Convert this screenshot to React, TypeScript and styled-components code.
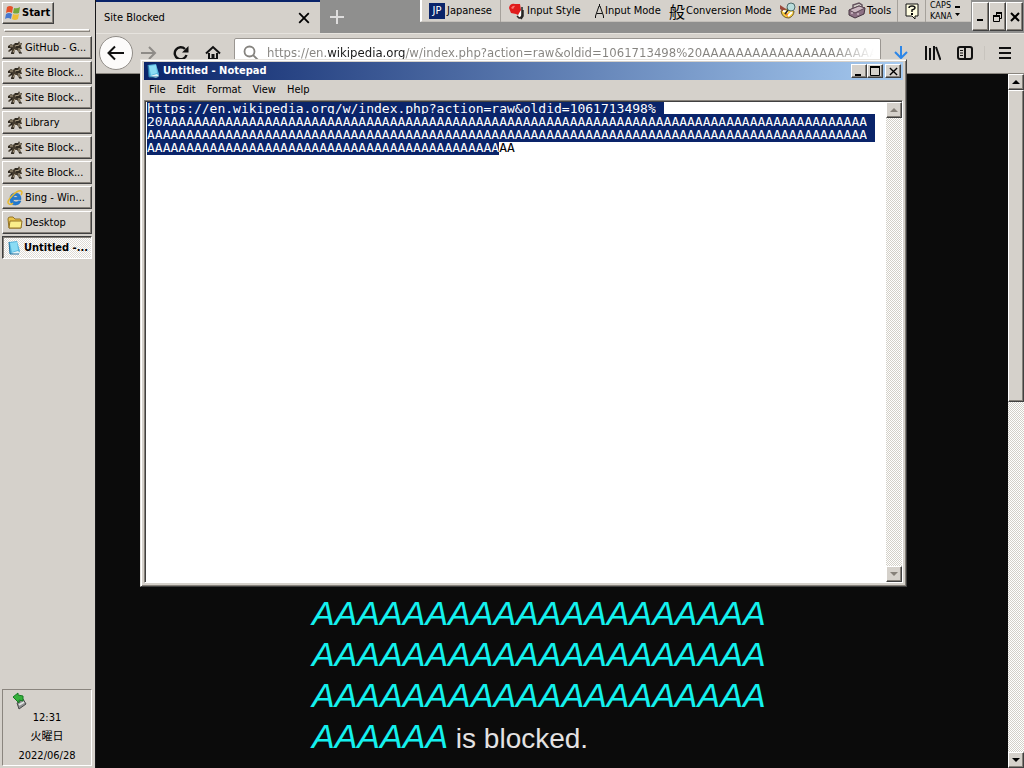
import React, { useEffect, useRef } from 'react';
import styled, { createGlobalStyle, css } from 'styled-components';

const face = '#d5d1cb';
const navy = '#0a246a';
const uiFont = '"DejaVu Sans Condensed", "Noto Sans CJK JP", sans-serif';

const GlobalStyle = createGlobalStyle`
  *, *::before, *::after { box-sizing: border-box; }
  body { margin: 0; background: #0b0b0b; font: 11px/14px ${uiFont}; color: #000; }
  button, input, textarea { font: inherit; color: inherit; margin: 0; padding: 0; border: 0; border-radius: 0; outline: 0; }
  button { background: none; white-space: nowrap; }
  svg { display: block; flex: none; }
`;

const raised = css`
  background: ${face};
  border: 1px solid;
  border-color: #fff #404040 #404040 #fff;
  box-shadow: inset -1px -1px 0 #858079;
`;

const checker = css`
  background: repeating-conic-gradient(#fff 0 25%, #d3d0c8 0 50%) 0 0 / 2px 2px;
`;

const Desktop = styled.div`
  position: relative;
  display: flex;
  height: 100vh;
  overflow: hidden;
`;

/* Taskbar */
const Taskbar = styled.aside`
  display: flex;
  flex-direction: column;
  flex: none;
  width: 96px;
  padding: 2px 3px 2px 2px;
  background: ${face};
  border-right: 1px solid #17171a;
`;

const StartButton = styled.button`
  ${raised}
  display: flex;
  align-items: center;
  gap: 1px;
  width: 52px;
  height: 22px;
  padding-left: 1px;
  font-weight: bold;
`;

const Divider = styled.div`
  height: 3px;
  margin: 5px 2px 4px;
  border: 1px solid;
  border-color: #fff #8a857e #8a857e #fff;
`;

const TaskList = styled.nav`
  display: flex;
  flex-direction: column;
  gap: 2px;
`;

const TaskButton = styled.button<{ $active?: boolean }>`
  ${raised}
  display: flex;
  align-items: center;
  gap: 2px;
  height: 23px;
  padding: 0 1px 0 4px;
  overflow: hidden;
  ${p => p.$active && css`
    background: repeating-conic-gradient(#fff 0 25%, #dedbd5 0 50%) 0 0 / 2px 2px;
    border-color: #404040 #fff #fff #404040;
    box-shadow: inset 1px 1px 0 #858079;
    font-weight: bold;
  `}
`;

const Tray = styled.div`
  display: flex;
  flex-direction: column;
  gap: 5px;
  margin-top: auto;
  padding: 2px 2px 2px;
  border: 1px solid;
  border-color: #8a857e #fff #fff #8a857e;
  text-align: center;
`;

const TrayIcons = styled.div`
  height: 14px;
  padding-left: 6px;
`;

/* Browser */
const Browser = styled.main`
  display: flex;
  flex: 1;
  flex-direction: column;
  min-width: 0;
`;

const TabStrip = styled.div`
  display: flex;
  flex: none;
  height: 33px;
  background: #8f8f8e;
`;

const Tab = styled.div`
  display: flex;
  align-items: center;
  justify-content: space-between;
  width: 224px;
  padding: 0 10px 0 8px;
  background: ${face};
  border-top: 2px solid ${navy};
`;

const IconButton = styled.button`
  display: grid;
  place-items: center;
`;

const NewTab = styled(IconButton)`
  width: 34px;
`;

const NavBar = styled.div`
  display: flex;
  flex: none;
  align-items: center;
  gap: 16px;
  height: 41px;
  padding: 0 13px 2px 3px;
  background: ${face};
  border-top: 1px solid #e6e3de;
  border-bottom: 1px solid #8a857e;
`;

const BackButton = styled(IconButton)`
  width: 34px;
  height: 34px;
  margin-right: -8px;
  background: #fcfbfa;
  border: 1px solid #918d88;
  border-radius: 50%;
`;

const AddressBox = styled.label`
  display: flex;
  flex: 1;
  align-items: center;
  gap: 8px;
  height: 30px;
  margin-left: -3px;
  padding: 0 6px 0 8px;
  background: #fff;
  border: 1px solid #9a9691;
  border-radius: 2px;
`;

const AddressInput = styled.input`
  flex: 1;
  min-width: 0;
  height: 20px;
  font-size: 13px;
  color: transparent;
  background: linear-gradient(to right, #85837f 0 61px, #1a1a1a 61px 138px, #85837f 138px calc(100% - 40px), transparent);
  -webkit-background-clip: text;
  background-clip: text;
`;

const Tools = styled.div`
  display: flex;
  align-items: center;
  gap: 16px;
  margin-left: -4px;
`;

const MenuSlot = styled.div`
  margin-left: -5px;
  padding-left: 14px;
  border-left: 1px solid #c8c4be;
`;

const Viewport = styled.div`
  display: flex;
  flex: 1;
  min-height: 0;
`;

const Page = styled.article`
  flex: 1;
  min-width: 0;
  padding-top: 521px;
  overflow: hidden;
  background: #0b0b0b;
`;

const Message = styled.p`
  width: 480px;
  max-width: 100%;
  margin: 0 auto;
  padding-right: 12px;
  overflow-wrap: anywhere;
  color: #e4e2e2;
  font: 28px/41px "Liberation Sans", sans-serif;
`;

const Blocked = styled.em`
  color: #14f1ee;
  font-size: 34px;
  line-height: 34px;
`;

const Scrollbar = styled.div`
  ${checker}
  display: flex;
  flex: none;
  flex-direction: column;
  justify-content: space-between;
  width: 16px;
`;

const ScrollButton = styled.button`
  ${raised}
  display: grid;
  place-items: center;
  flex: none;
  width: 16px;
  height: 16px;
`;

const ScrollThumb = styled.div`
  ${raised}
  height: 312px;
  margin-bottom: auto;
`;

/* Browser window buttons */
const WindowButtons = styled.div`
  position: absolute;
  top: 2px;
  right: 1px;
  display: flex;
`;

const WindowButton = styled.button`
  ${raised}
  display: grid;
  place-items: center;
  width: 17px;
  height: 29px;
`;

/* Language bar */
const LanguageBar = styled.div`
  position: absolute;
  top: 0;
  right: 53px;
  display: flex;
  align-items: center;
  width: 551px;
  height: 22px;
  background: ${face};
  border-left: 2px solid #fff;
  border-bottom: 1px solid #c4c0ba;
`;

const LangButton = styled.button<{ $width: number; $ruled?: boolean }>`
  display: flex;
  align-items: center;
  gap: 1px;
  width: ${p => p.$width}px;
  height: 22px;
  padding-left: 7px;
  border-right: 1px solid ${p => (p.$ruled ? '#a5a19b' : 'transparent')};
`;

const LangBadge = styled.span`
  width: 16px;
  height: 16px;
  margin-right: 1px;
  background: ${navy};
  color: #fff;
  line-height: 16px;
  text-align: center;
`;

const Glyph = styled.span`
  font: 16px/20px "Noto Sans CJK JP", sans-serif;
`;

const Locks = styled.div`
  display: flex;
  flex-direction: column;
  padding-left: 4px;
  width: 28px;
  font: 8px/11px "DejaVu Sans", sans-serif;
`;

/* Notepad */
const Notepad = styled.section`
  position: absolute;
  top: 59px;
  right: 117px;
  left: 140px;
  display: flex;
  flex-direction: column;
  height: 528px;
  padding: 2px 3px 3px;
  background: ${face};
  border: 1px solid;
  border-color: #e6e3de #404040 #404040 #e6e3de;
  box-shadow: inset 1px 1px 0 #fff, inset -1px -1px 0 #858079;
`;

const TitleBar = styled.header`
  display: flex;
  flex: none;
  align-items: center;
  gap: 2px;
  height: 18px;
  padding: 0 2px;
  background: linear-gradient(to right, ${navy}, #a6caf0);
  color: #fff;
  font-weight: bold;
`;

const TitleText = styled.h1`
  flex: 1;
  margin: 0;
  font: inherit;
`;

const TitleButtons = styled.div`
  display: flex;
  color: #000;
`;

const TitleButton = styled.button<{ $spaced?: boolean }>`
  ${raised}
  display: grid;
  place-items: center;
  width: 16px;
  height: 14px;
  margin-left: ${p => (p.$spaced ? 2 : 0)}px;
`;

const MenuBar = styled.nav`
  display: flex;
  flex: none;
  align-items: center;
  height: 20px;
  padding-left: 5px;
  gap: 11px;
`;

const Editor = styled.div`
  display: flex;
  flex: 1;
  min-height: 0;
  background: #fff;
  border: 1px solid;
  border-color: #858079 #fff #fff #858079;
  box-shadow: inset 1px 1px 0 #404040;
  padding: 1px 0 0 2px;
`;

const TextArea = styled.textarea`
  flex: 1;
  min-width: 0;
  resize: none;
  overflow: hidden;
  background: transparent;
  font: 13px/13px "DejaVu Sans Mono", monospace;
  white-space: pre;
  &::selection { background: ${navy}; color: #fff; }
`;

const Arrow = ({ up, muted }: { up?: boolean; muted?: boolean }) => (
  <svg width="8" height="5" viewBox="0 0 8 5" fill={muted ? '#858079' : '#000'}>
    <path d={up ? 'M4 0 8 4H0Z' : 'M0 0H8L4 4Z'} />
  </svg>
);

const WindowsLogo = () => (
  <svg width="17" height="16" viewBox="0 0 17 16">
    <path d="M3 2Q6 0 9 2L8 8Q5 6 2 8Z" fill="#e5512a" />
    <path d="M10 3Q13 4 16 2L15 8Q12 9 9 8Z" fill="#74a83b" />
    <path d="M2 9Q5 7 8 9L7 14Q4 12 1 14Z" fill="#4677cf" />
    <path d="M9 9Q12 10 15 9L14 14Q11 16 8 14Z" fill="#eebd35" />
  </svg>
);

const BeastIcon = () => (
  <svg width="16" height="16" viewBox="0 0 16 16" fill="none">
    <path d="M1 6 4 4 6 5 8 3 11 3 12 1 13 3 15 3 14 6 15 9 13 9 14 13 12 13 10 10 8 10 7 14 4 14 5 10 2 12 1 11 4 8 1 8Z" fill="#453c2f" />
    <path d="M3 6H6M8 6 12 5M12 4H14M8 9 6 13M12 8V12" stroke="#b3a58a" />
    <path d="M1 7H3M8 4 11 4M9 7 13 7M4 13H7M12 13H15M5 8 4 10" stroke="#1c1812" />
  </svg>
);

const ExplorerIcon = () => (
  <svg width="16" height="16" viewBox="0 0 16 16" fill="none">
    <path d="M14 9.500H6Q6 12 9 12 10.500 12 11.500 11H14Q12.500 15 8.500 15 3 15 3 9 3 3 8.500 3 14 3 14 9.500ZM6 7.500H11Q10.500 5.500 8.500 5.500 6.500 5.500 6 7.500Z" fill="#237bd1" stroke="#1668b8" strokeWidth=".6" />
    <path d="M2 14Q-1 12 5 6T14 1Q16 2 14 5M2 14Q4 15 6 13" stroke="#e8b92e" strokeWidth="1.5" />
  </svg>
);

const FolderIcon = () => (
  <svg width="16" height="16" viewBox="0 0 16 16">
    <path d="M1 4Q1 2 3 2H6L8 4H13Q14 4 14 6V13H2Z" fill="#e8c34c" stroke="#947325" />
    <path d="M3 6H15L14 13H2Z" fill="#faed8a" stroke="#947325" />
  </svg>
);

const NoteIcon = () => (
  <svg width="15" height="16" viewBox="0 0 15 16">
    <path d="M2 2 10 1 13 11 12 14 3 14Z" fill="#58b5dc" />
    <path d="M3 3 10 2 11 10 5 12Z" fill="#8bdcf4" />
    <path d="M4 13 11 11 13 13 10 15Z" fill="#e6f4f7" />
    <path d="M2 2 3 14 12 14" fill="none" stroke="#2473a0" />
  </svg>
);

const EjectIcon = () => (
  <svg width="18" height="18" viewBox="0 0 18 18">
    <path d="M6 11 12 7 15 12 8 17Z" fill="#8e9090" stroke="#484a4a" />
    <path d="M8 13 13 10" stroke="#e1e3e3" strokeWidth="2" />
    <path d="M2 5 7 1V3L12 4 12 9 8 8V11Z" fill="#35b13b" stroke="#177b25" />
  </svg>
);

const Cross = ({ size = 10, weight = 2 }: { size?: number; weight?: number }) => (
  <svg width={size} height={size} viewBox="0 0 10 10" stroke="#000" strokeWidth={weight}>
    <path d="M1 1 9 9M9 1 1 9" />
  </svg>
);

const MinimizeIcon = () => (
  <svg width="10" height="9" viewBox="0 0 10 9"><path d="M1 7H7V9H1Z" /></svg>
);

const MaximizeIcon = () => (
  <svg width="11" height="10" viewBox="0 0 11 10" fill="none" stroke="#000">
    <path d="M.5 1.5H9.5V9.5H.5Z" /><path d="M0 1H10" strokeWidth="2" />
  </svg>
);

const RestoreIcon = () => (
  <svg width="10" height="10" viewBox="0 0 10 10" fill="none" stroke="#000">
    <path d="M3.5 3V1.5H8.5V6.5H7M.5 4.5H6.5V9.5H.5Z" /><path d="M3 1H9M0 4H7" strokeWidth="2" />
  </svg>
);

const PaintIcon = () => (
  <svg width="18" height="18" viewBox="0 0 18 18">
    <path d="M10 11 13 8V14L11 15Z" fill="#fff" />
    <path d="M14 5V12Q14 16 11 16L9 14M15 8V14L13 17" fill="none" stroke="#252525" strokeWidth="1.5" />
    <path d="M1 6Q2 1 7 2L12 2 13 8 10 13 8 12 3 11Z" fill="#e01c1c" />
    <path d="M3 6Q5 3 7 4L5 7Z" fill="#fb7771" />
  </svg>
);

const PadIcon = () => (
  <svg width="18" height="18" viewBox="0 0 18 18">
    <path d="M2 9Q9 5 15 9 15 14 10 16 3 16 2 9Z" fill="#f3cd3e" stroke="#725b2a" />
    <path d="M1 3 7 7 4 9 1 7Z" fill="#9c493a" /><path d="M5 11 10 12 9 15Z" fill="#f47b22" />
    <path d="M4 9 9 10M9 14 13 10" stroke="#fff" strokeWidth="2" />
    <circle cx="12" cy="5" r="4" fill="#b9dddc" stroke="#4e6969" /><path d="M9 8 6 12" stroke="#252525" strokeWidth="1.5" />
  </svg>
);

const ToolboxIcon = () => (
  <svg width="18" height="18" viewBox="0 0 18 18">
    <path d="M1 8 11 4 17 6 16 12 7 16 1 13Z" fill="#8d7184" stroke="#44343f" />
    <path d="M1 8 11 4 17 6 7 11Z" fill="#cdbac3" stroke="#5a4652" />
    <path d="M5 6V3L11 1 14 3V5" fill="none" stroke="#65545f" strokeWidth="1.5" />
    <path d="M10 11V13M4 10V12" stroke="#eee2e7" />
  </svg>
);

const HelpIcon = () => (
  <svg width="15" height="18" viewBox="0 0 15 18">
    <path d="M1 2H13V14H10V17L7 14H1Z" fill="#fffde0" stroke="#111" />
    <path d="M4 6Q4 4 7 4 10 4 10 6 10 7 7 8V10" fill="none" stroke="#111" strokeWidth="1.5" /><path d="M6 11H8V13H6Z" />
  </svg>
);

const taskItems = [
  { label: 'GitHub - G...', icon: <BeastIcon /> },
  { label: 'Site Block...', icon: <BeastIcon /> },
  { label: 'Site Block...', icon: <BeastIcon /> },
  { label: 'Library', icon: <BeastIcon /> },
  { label: 'Site Block...', icon: <BeastIcon /> },
  { label: 'Site Block...', icon: <BeastIcon /> },
  { label: 'Bing - Win...', icon: <ExplorerIcon /> },
  { label: 'Desktop', icon: <FolderIcon /> },
  { label: 'Untitled -...', icon: <NoteIcon />, active: true },
];

const urlLead = 'https://en.wikipedia.org/w/index.php?action=raw&oldid=1061713498%';
const noteLines = [urlLead, '20' + 'A'.repeat(90), 'A'.repeat(92), 'A'.repeat(47)];
const noteText = noteLines.join('\n');

export default function App() {
  const editor = useRef<HTMLTextAreaElement>(null);

  useEffect(() => {
    editor.current?.focus();
    editor.current?.setSelectionRange(0, noteText.length - 2);
  }, []);

  return (
    <>
      <GlobalStyle />
      <Desktop>
        <Taskbar>
          <StartButton><WindowsLogo />Start</StartButton>
          <Divider />
          <TaskList>
            {taskItems.map((item, i) => (
              <TaskButton key={i} $active={item.active}>{item.icon}{item.label}</TaskButton>
            ))}
          </TaskList>
          <Tray>
            <TrayIcons><EjectIcon /></TrayIcons>
            <time>12:31</time>
            <span>火曜日</span>
            <span>2022/06/28</span>
          </Tray>
        </Taskbar>

        <Browser>
          <TabStrip>
            <Tab>
              Site Blocked
              <IconButton aria-label="Close tab"><Cross size={12} weight={1.5} /></IconButton>
            </Tab>
            <NewTab aria-label="New tab">
              <svg width="14" height="14" viewBox="0 0 14 14" stroke="#dedddd" strokeWidth="2"><path d="M7 0V14M0 7H14" /></svg>
            </NewTab>
          </TabStrip>
          <NavBar>
            <BackButton aria-label="Back">
              <svg width="18" height="16" viewBox="0 0 18 16" fill="none" stroke="#111" strokeWidth="2"><path d="M17 8H2M8 1.5 1.5 8 8 14.5" /></svg>
            </BackButton>
            <IconButton aria-label="Forward">
              <svg width="16" height="16" viewBox="0 0 16 16" fill="none" stroke="#8e8b87" strokeWidth="2"><path d="M0 8H14M8 2 14 8 8 14" /></svg>
            </IconButton>
            <IconButton aria-label="Reload">
              <svg width="16" height="16" viewBox="0 0 16 16" fill="none" stroke="#111" strokeWidth="2.4"><path d="M13.5 10A6 6 0 1 1 12 4" /><path d="M15.5 1V7.5H9Z" fill="#111" stroke="none" /></svg>
            </IconButton>
            <IconButton aria-label="Home">
              <svg width="16" height="16" viewBox="0 0 16 16" fill="none" stroke="#111" strokeWidth="2"><path d="M1 8.5 8 2 15 8.5M4 8V14H12V8" /><path d="M8 9V14" strokeWidth="3" /></svg>
            </IconButton>
            <AddressBox>
              <svg width="16" height="16" viewBox="0 0 16 16" fill="none" stroke="#85837f" strokeWidth="1.8"><circle cx="6.5" cy="6.5" r="5" /><path d="M10 10 15 15" /></svg>
              <AddressInput aria-label="Address" readOnly value={urlLead + '20' + 'A'.repeat(24)} />
            </AddressBox>
            <Tools>
              <IconButton aria-label="Downloads">
                <svg width="16" height="16" viewBox="0 0 16 16" fill="none" stroke="#2c86e8" strokeWidth="2"><path d="M8 1V13M2 7 8 13 14 7" /></svg>
              </IconButton>
              <IconButton aria-label="Library">
                <svg width="16" height="16" viewBox="0 0 16 16" fill="none" stroke="#111" strokeWidth="2"><path d="M1 1V15M5 3V15M9 1V15M11 2 15.5 15" /></svg>
              </IconButton>
              <IconButton aria-label="Sidebars">
                <svg width="16" height="16" viewBox="0 0 16 16" fill="none" stroke="#111" strokeWidth="2"><rect x="1" y="2" width="14" height="12" rx="2" /><path d="M8 2V14" /><path d="M3 5.5H6M3 8H6M3 10.5H6" strokeWidth="1" /></svg>
              </IconButton>
              <MenuSlot>
                <IconButton aria-label="Menu">
                  <svg width="12" height="14" viewBox="0 0 12 14" stroke="#111" strokeWidth="2"><path d="M0 2H12M0 7H12M0 12H12" /></svg>
                </IconButton>
              </MenuSlot>
            </Tools>
          </NavBar>
          <Viewport>
            <Page>
              <Message><Blocked>{'A'.repeat(66)}</Blocked> is blocked.</Message>
            </Page>
            <Scrollbar>
              <ScrollButton aria-label="Scroll up"><Arrow up /></ScrollButton>
              <ScrollThumb />
              <ScrollButton aria-label="Scroll down"><Arrow /></ScrollButton>
            </Scrollbar>
          </Viewport>
        </Browser>

        <LanguageBar>
          <LangButton $width={79} $ruled><LangBadge>JP</LangBadge>Japanese</LangButton>
          <LangButton $width={87}><PaintIcon />Input Style</LangButton>
          <LangButton $width={74}>
            <svg width="9" height="16" viewBox="0 0 9 16" fill="none" stroke="#111"><path d="M.5 15V13L4 3H5L8.5 13V15M2 10.5H7M4.5 1V3" /></svg>
            Input Mode
          </LangButton>
          <LangButton $width={110}><Glyph>般</Glyph>Conversion Mode</LangButton>
          <LangButton $width={69}><PadIcon />IME Pad</LangButton>
          <LangButton $width={57} $ruled><ToolboxIcon />Tools</LangButton>
          <LangButton $width={28} $ruled aria-label="Help"><HelpIcon /></LangButton>
          <Locks><span>CAPS</span><span>KANA</span></Locks>
          <svg width="7" height="14" viewBox="0 0 7 14"><path d="M1 2H6V4H1ZM1 9H6L3.5 12Z" /></svg>
        </LanguageBar>

        <WindowButtons>
          <WindowButton aria-label="Minimize"><MinimizeIcon /></WindowButton>
          <WindowButton aria-label="Restore"><RestoreIcon /></WindowButton>
          <WindowButton aria-label="Close"><Cross size={10} /></WindowButton>
        </WindowButtons>

        <Notepad>
          <TitleBar>
            <NoteIcon />
            <TitleText>Untitled - Notepad</TitleText>
            <TitleButtons>
              <TitleButton aria-label="Minimize"><MinimizeIcon /></TitleButton>
              <TitleButton aria-label="Maximize"><MaximizeIcon /></TitleButton>
              <TitleButton aria-label="Close" $spaced><Cross size={9} weight={1.5} /></TitleButton>
            </TitleButtons>
          </TitleBar>
          <MenuBar>
            {['File', 'Edit', 'Format', 'View', 'Help'].map(name => <button key={name}>{name}</button>)}
          </MenuBar>
          <Editor>
            <TextArea ref={editor} aria-label="Document" spellCheck={false} defaultValue={noteText} />
            <Scrollbar>
              <ScrollButton aria-label="Scroll up"><Arrow up muted /></ScrollButton>
              <ScrollButton aria-label="Scroll down"><Arrow muted /></ScrollButton>
            </Scrollbar>
          </Editor>
        </Notepad>
      </Desktop>
    </>
  );
}
